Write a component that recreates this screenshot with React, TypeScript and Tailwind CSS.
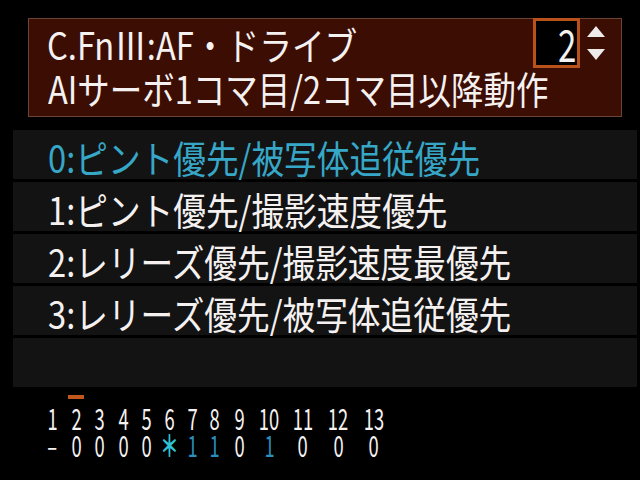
import React from 'react'

const options = [
  '0:ピント優先/被写体追従優先',
  '1:ピント優先/撮影速度優先',
  '2:レリーズ優先/撮影速度最優先',
  '3:レリーズ優先/被写体追従優先',
  '',
]

const cols = [
  { n: '1', v: '–', w: 'w-[24px]' },
  { n: '2', v: '0', w: 'w-[24px]', mark: true },
  { n: '3', v: '0', w: 'w-[23px]' },
  { n: '4', v: '0', w: 'w-[24px]' },
  { n: '5', v: '0', w: 'w-[23px]' },
  { n: '6', v: '＊', w: 'w-[23px]', star: true },
  { n: '7', v: '1', w: 'w-[22px]', blue: true },
  { n: '8', v: '1', w: 'w-[23px]', blue: true },
  { n: '9', v: '0', w: 'w-[27px]' },
  { n: '10', v: '1', w: 'w-[32px]', blue: true },
  { n: '11', v: '0', w: 'w-[35px]' },
  { n: '12', v: '0', w: 'w-[36px]' },
  { n: '13', v: '0', w: 'w-[35px]' },
]

export default function App() {
  return (
    <div className="w-[640px] h-[480px] bg-black overflow-hidden text-[#f5f1f1] font-['Noto_Sans_CJK_JP',sans-serif] flex flex-col">
      <div className="mt-[18px] ml-[28px] w-[594px] h-[99px] bg-[#3b0d03] border border-[#6a4536] flex flex-col">
        <div className="flex h-[52px]">
          <div className="flex-1 pl-[18px] pt-[4px]">
            <span className="inline-block text-[38px] leading-[42px] scale-x-[0.86] origin-left whitespace-nowrap">
              C.FnⅢ:AF・ドライブ
            </span>
          </div>
          <div className="-mt-[1px] w-[47px] h-[50px] bg-black border-[3px] border-[#b8521a] flex items-center justify-end pr-[1px]">
            <span className="inline-block text-[44px] leading-none scale-x-[0.75] origin-right">2</span>
          </div>
          <div className="w-[41px] flex flex-col items-center pr-[10px] pt-[7px] gap-[12px]">
            <svg width="18" height="11" viewBox="0 0 18 11">
              <polygon points="9,0 18,11 0,11" fill="#eeeaea" />
            </svg>
            <svg width="18" height="11" viewBox="0 0 18 11">
              <polygon points="0,0 18,0 9,11" fill="#eeeaea" />
            </svg>
          </div>
        </div>
        <div className="pl-[19px] -mt-[4px]">
          <span className="inline-block text-[38px] leading-[42px] scale-x-[0.855] origin-left whitespace-nowrap">
            AIサーボ1コマ目/2コマ目以降動作
          </span>
        </div>
      </div>

      <div className="mt-[13px] ml-[13px] w-[624px] flex flex-col gap-[3px]">
        {options.map((o, i) => (
          <div key={i} className="h-[49px] bg-[#131313] pl-[35px] flex items-center">
            <span
              className={
                'inline-block text-[38px] leading-none pt-[4px] scale-x-[0.86] origin-left whitespace-nowrap ' +
                (i === 0 ? 'text-[#37a7c7]' : 'text-[#f5f1f1]')
              }
            >
              {o}
            </span>
          </div>
        ))}
      </div>

      <div className="mt-[8px] ml-[40px] flex">
        {cols.map((c, i) => (
          <div key={i} className={c.w + ' flex flex-col items-center'}>
            <div className={'w-[16px] h-[4px] ' + (c.mark ? 'bg-[#c0581c]' : '')} />
            <span className="inline-block text-[27px] leading-[27px] mt-[5px] scale-x-[0.68] scale-y-[1.1]">{c.n}</span>
            <span
              className={
                'inline-block text-[27px] leading-[27px] scale-x-[0.68] scale-y-[1.1] ' +
                (c.star ? 'text-[#2fc2d4] font-bold' : c.blue ? 'text-[#2a8fbf]' : 'text-[#f5f1f1]')
              }
            >
              {c.v}
            </span>
          </div>
        ))}
      </div>
    </div>
  )
}
